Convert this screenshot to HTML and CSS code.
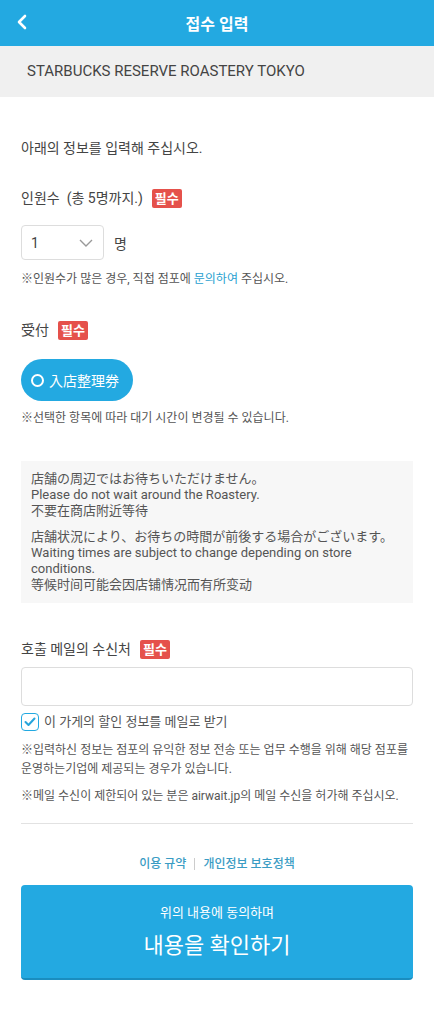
FILE: index.html
```html
<!DOCTYPE html>
<html lang="ko">
<head>
    <meta charset="UTF-8">
    <meta name="viewport" content="width=device-width, initial-scale=1.0">
    <title>접수 입력</title>
    <link rel="stylesheet" href="styles.css">
</head>
<body>
    <div class="header">
        <span class="back">
            <svg width="12" height="16" viewBox="0 0 12 16"><path d="M9 2 L3 8 L9 14" fill="none" stroke="#fff" stroke-width="2.6" stroke-linecap="round" stroke-linejoin="round"/></svg>
        </span>
        <h1>접수 입력</h1>
    </div>
    <div class="shop">STARBUCKS RESERVE ROASTERY TOKYO</div>

    <div class="content">
        <p class="intro">아래의 정보를 입력해 주십시오.</p>

        <div class="label">인원수 <span class="sub">(총 5명까지.)</span> <span class="required">필수</span></div>
        <div class="count-row">
            <div class="select">
                <span>1</span>
                <svg width="14" height="8" viewBox="0 0 14 8"><path d="M1 1 L7 7 L13 1" fill="none" stroke="#999" stroke-width="1.4"/></svg>
            </div>
            <span class="unit">명</span>
        </div>
        <p class="note">※인원수가 많은 경우, 직접 점포에 <a href="#">문의하여</a> 주십시오.</p>

        <div class="label label-gap">受付 <span class="required">필수</span></div>
        <button class="pill"><span class="ring"></span>入店整理券</button>
        <p class="note">※선택한 항목에 따라 대기 시간이 변경될 수 있습니다.</p>

        <div class="notice">
            <p>店舗の周辺ではお待ちいただけません。<br>Please do not wait around the Roastery.<br>不要在商店附近等待</p>
            <p>店舗状況により、お待ちの時間が前後する場合がございます。<br>Waiting times are subject to change depending on store conditions.<br>等候时间可能会因店铺情况而有所变动</p>
        </div>

        <div class="label label-mail">호출 메일의 수신처 <span class="required">필수</span></div>
        <input class="email" type="text">
        <label class="check">
            <span class="box">
                <svg width="12" height="10" viewBox="0 0 12 10"><path d="M1.5 5 L4.5 8 L10.5 1.5" fill="none" stroke="#27a5dc" stroke-width="2" stroke-linecap="round" stroke-linejoin="round"/></svg>
            </span>
            이 가게의 할인 정보를 메일로 받기
        </label>
        <p class="note note-long">※입력하신 정보는 점포의 유익한 정보 전송 또는 업무 수행을 위해 해당 점포를 운영하는기업에 제공되는 경우가 있습니다.</p>
        <p class="note note-long">※메일 수신이 제한되어 있는 분은 airwait.jp의 메일 수신을 허가해 주십시오.</p>

        <hr class="divider">

        <div class="links">
            <a href="#">이용 규약</a><span class="sep"></span><a href="#">개인정보 보호정책</a>
        </div>

        <button class="submit">
            <span class="small">위의 내용에 동의하며</span>
            <span class="big">내용을 확인하기</span>
        </button>
    </div>
</body>
</html>
```

FILE: styles.css
```css
:root {
    --blue: #23a9e1;
    --blue-dark: #1a8dbf;
    --red: #e5514b;
    --text: #444;
    --note: #555;
}

body {
    margin: 0;
    font-family: Roboto, 'Noto Sans CJK KR', 'Noto Sans CJK JP', sans-serif;
    color: var(--text);
    background: #fff;
}

.header {
    height: 46px;
    background: var(--blue);
    display: flex;
    align-items: center;
    justify-content: center;
    position: relative;
}

.header h1 {
    margin: 0;
    color: #fff;
    font-size: 16px;
    font-weight: bold;
}

.back {
    position: absolute;
    left: 16px;
    top: 14px;
}

.shop {
    background: #f0f0f0;
    height: 51px;
    line-height: 51px;
    padding-left: 27px;
    font-size: 15px;
    color: #444;
}

.content {
    padding: 0 21px;
}

p {
    margin: 0;
}

.intro {
    margin-top: 41px;
    font-size: 14px;
    line-height: 20px;
}

.label {
    margin-top: 30px;
    font-size: 14px;
    line-height: 20px;
    display: flex;
    align-items: center;
}

.label-gap {
    margin-top: 32px;
}

.label-mail {
    margin-top: 36px;
}

.sub {
    margin-left: 7px;
}

.required {
    display: inline-block;
    margin-left: 9px;
    background: var(--red);
    color: #fff;
    font-size: 13px;
    font-weight: bold;
    line-height: 19px;
    padding: 0 3px;
    border-radius: 2px;
}

.count-row {
    margin-top: 17px;
    display: flex;
    align-items: center;
}

.select {
    width: 83px;
    height: 35px;
    box-sizing: border-box;
    border: 1px solid #ddd;
    border-radius: 4px;
    display: flex;
    align-items: center;
    justify-content: space-between;
    padding: 0 10px 0 9px;
    font-size: 14px;
}

.unit {
    margin-left: 10px;
    font-size: 14px;
}

.note {
    margin-top: 10px;
    font-size: 12px;
    line-height: 18px;
    color: var(--note);
}

.note a,
.links a {
    color: #2a9fd0;
    text-decoration: none;
}

.links a {
    color: #3a9cc4;
    font-weight: 500;
}

.pill {
    margin-top: 19px;
    height: 42px;
    padding: 0 14px 0 10px;
    border: none;
    border-radius: 21px;
    background: var(--blue);
    color: #fff;
    font-family: inherit;
    font-size: 14px;
    display: flex;
    align-items: center;
}

.ring {
    width: 9px;
    height: 9px;
    border: 2px solid #fff;
    border-radius: 50%;
    margin-right: 5px;
}

.pill + .note {
    margin-top: 8px;
}

.notice {
    margin-top: 34px;
    background: #f7f7f7;
    padding: 10px;
    font-size: 13px;
    line-height: 16px;
    color: #555;
}

.notice p + p {
    margin-top: 10px;
}

.email {
    display: block;
    margin-top: 8px;
    width: 100%;
    height: 39px;
    box-sizing: border-box;
    border: 1px solid #ddd;
    border-radius: 4px;
}

.check {
    margin-top: 7px;
    display: flex;
    align-items: center;
    font-size: 13px;
    line-height: 18px;
    color: var(--note);
}

.box {
    width: 18px;
    height: 18px;
    box-sizing: border-box;
    border: 1.5px solid var(--blue);
    border-radius: 4px;
    display: flex;
    align-items: center;
    justify-content: center;
    margin-right: 5px;
}

.note-long {
    margin-top: 10px;
    line-height: 19px;
}

.note-long + .note-long {
    margin-top: 8px;
}

.divider {
    margin: 17px 0 0;
    border: none;
    border-top: 1px solid #e2e2e2;
}

.links {
    margin-top: 31px;
    display: flex;
    justify-content: center;
    align-items: center;
    font-size: 12px;
    line-height: 18px;
}

.sep {
    width: 1px;
    height: 12px;
    background: #ccc;
    margin: 0 8px;
}

.submit {
    margin-top: 12px;
    width: 100%;
    height: 95px;
    border: none;
    border-bottom: 2px solid var(--blue-dark);
    border-radius: 4px;
    background: var(--blue);
    color: #fff;
    font-family: inherit;
    display: flex;
    flex-direction: column;
    align-items: center;
    justify-content: center;
}

.small {
    font-size: 13px;
    line-height: 18px;
}

.big {
    margin-top: 10px;
    font-size: 22px;
    line-height: 28px;
}
```
